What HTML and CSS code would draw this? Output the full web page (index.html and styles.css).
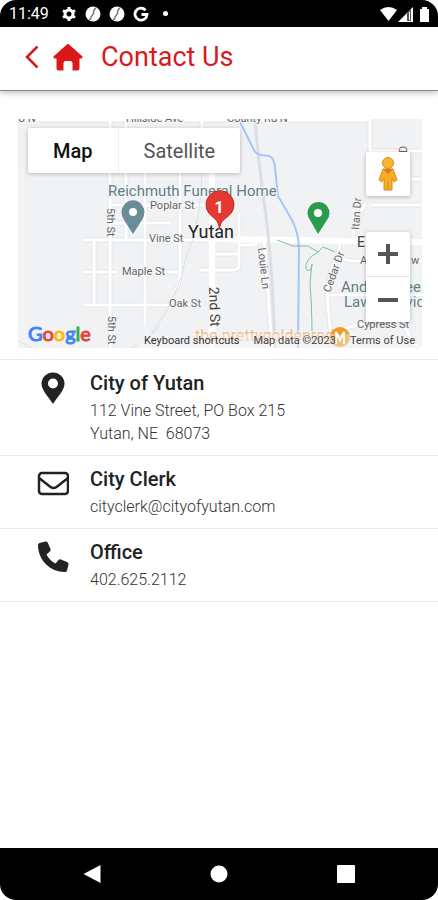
FILE: index.html
```html
<!DOCTYPE html>
<html lang="en">
<head>
    <meta charset="UTF-8">
    <meta name="viewport" content="width=device-width, initial-scale=1.0">
    <title>Contact Us</title>
    <link rel="stylesheet" href="styles.css">
</head>
<body>
  <div class="phone">

    <div class="status-bar">
      <span class="time">11:49</span>
      <svg class="status-icon" viewBox="0 0 16 16"><path fill="none" stroke="#fff" stroke-width="3" d="M8 4a4 4 0 1 0 .01 0z"/><path stroke="#fff" stroke-width="3" d="M8 1v3M8 12v3M2 4.500l2.500 1.500M11.500 10l2.500 1.500M2 11.500l2.500-1.500M11.500 6l2.500-1.500"/></svg>
      <svg class="status-icon" viewBox="0 0 16 16"><circle cx="8" cy="8" r="7.500" fill="#fff"/><path d="M11 2C7 4 10 7 7.500 9S7 13 4 14" fill="none" stroke="#777" stroke-width="1.500"/></svg>
      <svg class="status-icon" viewBox="0 0 16 16"><circle cx="8" cy="8" r="7.500" fill="#fff"/><path d="M11 2C7 4 10 7 7.500 9S7 13 4 14" fill="none" stroke="#777" stroke-width="1.500"/></svg>
      <svg class="status-icon" viewBox="0 0 16 16"><path d="M12.500 4.200A6 6 0 1 0 14 8.500H8.500" fill="none" stroke="#fff" stroke-width="2.800"/></svg>
      <span class="dot"></span>
      <svg class="signals" viewBox="0 0 54 18">
        <path fill="#fff" d="M1 5q8.500-6 17 0L9.500 16z"/>
        <path fill="#fff" d="M19 17L34 2v15z"/>
        <path fill="#555" d="M28 8l4-4v12h-4z"/><path stroke="#fff" stroke-width="1" d="M30.500 7v8"/>
        <path fill="#fff" d="M41 4h2V2h5v2h2v13h-9z"/>
      </svg>
    </div>

    <header class="header">
      <a class="back" href="#" aria-label="Back">
        <svg viewBox="0 0 14 24"><path d="M12.500 1.500L2 12l10.500 10.500" fill="none" stroke="#d71a1c" stroke-width="2.500"/></svg>
      </a>
      <a class="home" href="#" aria-label="Home">
        <svg viewBox="0 0 30 27"><path fill="#dc1717" d="M13.600.8a2 2 0 0 1 2.800 0L29 12c1 1 .5 2.500-1 2.500h-1.500V24a2.500 2.500 0 0 1-2.500 2.500h-4.500V19a2 2 0 0 0-2-2h-5a2 2 0 0 0-2 2v7.500H6A2.500 2.500 0 0 1 3.500 24v-9.500H2C.5 14.500 0 13 1 12z"/></svg>
      </a>
      <h1>Contact Us</h1>
    </header>

    <main>
      <div class="map">
        <svg class="map-canvas" viewBox="18 119 404 229">
          <rect x="18" y="119" width="404" height="229" fill="#f0f2f4"/>
          <!-- grey outlines first, then the white roads over them -->
          <g fill="none" stroke="#e4e7ea" stroke-width="5">
            <path d="M18 120H370M84 240H230M84 272H117M84 305H170M94 240v65M110 173v175M145 173v152M126 173v67M126 119v10M110 119v10M180 173v100q0 12-5 18M191 305h-10M166 272h12M110 205h120M110 223h60M215 254h23M200 270h33q6 0 6-6v-50M238 245h14q5 0 5-5M202 119v54M370 119v45M370 151h52M402 151v12M370 179h52M370 205h52M366 203l-13 22v15M340 240q0 12-5 20t-8 35l4 40M326 295h96M340 257q5 4 15 4h67M340 330q30-10 50-8t20 20l12 6M264 240l8 108"/>
          </g>
          <g fill="none" stroke="#fff" stroke-width="3">
            <path d="M18 120H370M84 240H230M84 272H117M84 305H170M94 240v65M110 173v175M145 173v152M126 173v67M126 119v10M110 119v10M180 173v100q0 12-5 18M191 305h-10M166 272h12M110 205h120M110 223h60M215 254h23M200 270h33q6 0 6-6v-50M238 245h14q5 0 5-5M202 119v54M370 119v45M370 151h52M402 151v12M370 179h52M370 205h52M366 203l-13 22v15M340 240q0 12-5 20t-8 35l4 40M326 295h96M340 257q5 4 15 4h67M340 330q30-10 50-8t20 20l12 6M264 240l8 108"/>
            <path stroke-width="6" d="M212 173v175M212 239l210 3"/>
          </g>
          <path d="M18 341l14 7M150 335l10-8M130 348l8-3" fill="none" stroke="#dcdfe2" stroke-width="1"/>
          <path d="M255 119q3 40 10 90t10 139" fill="none" stroke="#dcdee1" stroke-width="3"/>
          <path d="M202 173q-3 60-15 80q-8 45-35 80" fill="none" stroke="#dcdfe2" stroke-width="1"/>
          <path d="M240 122l13 26q2 6 8 7l8 1q5 1 6 12l3 28 14 24q7 14 7 30l-1 98" fill="none" stroke="#a5c6f7" stroke-width="2"/>
          <path d="M277 240l16 6h15l10 6 5-5 12 5M318 252q-14 8-12 17q5 5 6-5l-2 18q2 30 2 50" fill="none" stroke="#7fbf97" stroke-width="1"/>

          <g class="map-street">
            <text x="18" y="122">U N</text>
            <text x="126" y="122">Hillside Ave</text>
            <text x="227" y="122">County Rd N</text>
            <text x="150" y="209">Poplar St</text>
            <text x="149" y="242">Vine St</text>
            <text x="122" y="275">Maple St</text>
            <text x="169" y="307">Oak St</text>
            <text x="357" y="328">Cypress St</text>
            <text transform="translate(107 208) rotate(90)">5th St</text>
            <text transform="translate(108 316) rotate(90)">5th St</text>
            <text transform="translate(258 248) rotate(84)">Louie Ln</text>
            <text transform="translate(330 293) rotate(-70)">Cedar Dr</text>
            <text transform="translate(359 230) rotate(-86)">Itan Dr</text>
            <text transform="translate(407 153) rotate(-90)">D</text>
            <text class="map-main" transform="translate(209 287) rotate(88)">2nd St</text>
            <text class="map-main" x="357" y="247">E</text>
            <text x="360" y="264">A</text>
            <text x="411" y="264">w</text>
          </g>
          <g class="map-place">
            <text x="108" y="196">Reichmuth Funeral Home</text>
            <text x="341" y="292">Anders Tree</text>
            <text x="344" y="307">Lawn Service</text>
          </g>
          <text class="map-shop" x="195" y="341">the.prettygoldenrod</text>

          <path fill="#6a8b98" d="M133 234l-9-14q-5-8 0-15a11 11 0 0 1 18 0q5 7 0 15z"/>
          <circle cx="133" cy="212" r="4" fill="#fff"/>
          <path fill="#2b9c4e" d="M318 234l-8-14q-5-7 0-14a11 11 0 0 1 17 0q5 7 0 14z"/>
          <circle cx="318" cy="213" r="4" fill="#fff"/>
          <circle cx="340" cy="337" r="10" fill="#f39a2c"/>
          <path d="M336 344v-12l4 8 4-8v12" fill="none" stroke="#fff" stroke-width="2"/>

          <text class="map-city" x="188" y="238">Yutan</text>
          <path fill="#e53a31" stroke="#c5281f" stroke-width="1" d="M219.500 229c-1-9-5-10-10-15a14 14 0 1 1 21 0c-5 5-10 6-11 15z"/>
          <text class="map-number" x="219" y="213">1</text>
        </svg>

        <div class="map-type">
          <button class="active">Map</button>
          <button>Satellite</button>
        </div>
        <div class="map-tools">
          <button class="pegman" aria-label="Street view">
            <svg viewBox="0 0 20 34">
              <path fill="#f5ae25" stroke="#d98c1a" stroke-width="1" d="M5 12h10l4 11-3 2-2-4v12H6V21l-2 4-3-2z"/>
              <circle cx="10" cy="6" r="5.500" fill="#f8b62d" stroke="#d98c1a"/>
              <path fill="#e2762a" d="M5 12h10l-5 5z"/><path d="M10 24v9" stroke="#d98c1a"/>
            </svg>
          </button>
          <div class="zoom">
            <button aria-label="Zoom in"><svg viewBox="0 0 20 20"><path d="M0 10h20M10 0v20" stroke="#555" stroke-width="4"/></svg></button>
            <button aria-label="Zoom out"><svg viewBox="0 0 20 20"><path d="M0 10h20" stroke="#555" stroke-width="4"/></svg></button>
          </div>
        </div>
        <a class="google" href="#"><span class="blue">G</span><span class="red">o</span><span class="yellow">o</span><span class="blue">g</span><span class="green">l</span><span class="red">e</span></a>
        <div class="map-terms">
          <button>Keyboard shortcuts</button>
          <span>Map data ©2023</span>
          <a href="#">Terms of Use</a>
        </div>
      </div>

      <ul class="contacts">
        <li>
          <svg class="contact-icon" viewBox="0 0 32 32"><path fill="#222" fill-rule="evenodd" d="M16 32C13 27 4.500 18 4.500 12a11.500 11.500 0 0 1 23 0C27.500 18 19 27 16 32zm0-15.500a5 5 0 1 0 0-10 5 5 0 0 0 0 10z"/></svg>
          <div>
            <h2>City of Yutan</h2>
            <p>112 Vine Street, PO Box 215<br>Yutan, NE&nbsp; 68073</p>
          </div>
        </li>
        <li>
          <svg class="contact-icon" viewBox="0 0 32 32"><rect x="2" y="5" width="29" height="21" rx="3" fill="none" stroke="#222" stroke-width="2.500"/><path d="M2 10l11.500 9q3 2 6 0L31 10" fill="none" stroke="#222" stroke-width="2.500"/></svg>
          <div>
            <h2>City Clerk</h2>
            <p><a href="mailto:cityclerk@cityofyutan.com">cityclerk@cityofyutan.com</a></p>
          </div>
        </li>
        <li>
          <svg class="contact-icon" viewBox="0 0 32 32"><path fill="#222" d="M2.500 2L8.500.5q1.500-.3 2.200 1L13.500 8q.5 1.500-.7 2.500L9.500 13.500q3 6 9 9l3-3.500q1-1.200 2.500-.6l6.500 2.800q1.300.7 1 2.200L30 29.500q-.4 1.500-2 1.500C13 31 1 19 1 4q0-1.600 1.500-2z"/></svg>
          <div>
            <h2>Office</h2>
            <p><a href="tel:4026252112">402.625.2112</a></p>
          </div>
        </li>
      </ul>
    </main>

    <nav class="nav-bar">
      <button aria-label="Back"><svg viewBox="0 0 18 18"><path fill="#fff" d="M17.500 0v18L.5 9z"/></svg></button>
      <button aria-label="Home"><svg viewBox="0 0 18 18"><circle cx="9" cy="9" r="8.500" fill="#fff"/></svg></button>
      <button aria-label="Recent apps"><svg viewBox="0 0 18 18"><rect width="18" height="18" rx="1" fill="#fff"/></svg></button>
    </nav>
  </div>
</body>
</html>
```
FILE: styles.css
```css
*{
    box-sizing: border-box;
}
body{
    font-family: Roboto, "Liberation Sans", sans-serif;
    margin: 0;
    background-color: #fff;
    color: #222;
}
button{
    font-family: inherit;
    margin: 0;
    padding: 0;
    border: 0;
    background: none;
    cursor: pointer;
}
a{
    color: inherit;
    text-decoration: none;
}
svg{
    display: block;
}
.phone{
    display: flex;
    flex-direction: column;
    min-height: 100vh;
    border-radius: 16px;
    overflow: hidden;
}

/* status bar */
.status-bar{
    display: flex;
    align-items: center;
    gap: 8px;
    height: 27px;
    padding: 0 9px;
    background-color: #000;
    color: #fff;
}
.time{
    width: 44px;
    font-size: 16px;
    font-weight: 400;
}
.status-icon{
    width: 16px;
    height: 16px;
}
.dot{
    width: 5px;
    height: 5px;
    margin-left: 6px;
    border-radius: 50%;
    background-color: #fff;
}
.signals{
    width: 54px;
    height: 18px;
    margin-left: auto;
    margin-right: -4px;
}

/* header */
.header{
    display: flex;
    align-items: center;
    height: 64px;
    padding: 0 16px 3px 25px;
    border-bottom: 1px solid #888;
    box-shadow: 0 2px 6px rgba(0,0,0,0.25);
}
.back svg{
    width: 14px;
    height: 24px;
}
.home{
    margin: 0 18px 0 14px;
}
.home svg{
    width: 30px;
    height: 27px;
}
.header h1{
    margin: 0;
    font-size: 27px;
    font-weight: 400;
    color: #d71a1c;
}

/* map */
.map{
    position: relative;
    margin: 28px 16px 11px 18px;
}
.map-canvas{
    width: 100%;
}
.map-canvas text{
    paint-order: stroke;
    stroke: #f5f6f7;
    stroke-width: 2px;
}
.map-street{
    font-size: 11px;
    fill: #666;
}
.map-main{
    font-size: 14px;
    fill: #444;
}
.map-place{
    font-size: 15px;
    fill: #607d86;
}
.map-shop{
    font-size: 16px;
    fill: #f0b98c;
}
.map-city{
    font-size: 18px;
    fill: #222;
}
.map-canvas .map-number{
    font-size: 16px;
    font-weight: 700;
    fill: #fff;
    stroke: none;
    text-anchor: middle;
}
.map-type{
    position: absolute;
    top: 9px;
    left: 10px;
    display: flex;
    background-color: #fff;
    border-radius: 2px;
    box-shadow: 0 1px 4px rgba(0,0,0,0.25);
}
.map-type button{
    height: 45px;
    padding: 0 25px;
    font-size: 20px;
    color: #555;
}
.map-type .active{
    border-right: 1px solid #eee;
    font-weight: 500;
    color: #111;
}
.map-tools{
    position: absolute;
    top: 33px;
    right: 12px;
    display: flex;
    flex-direction: column;
    gap: 36px;
    width: 44px;
}
.pegman, .zoom{
    background-color: #fff;
    border-radius: 2px;
    box-shadow: 0 1px 4px rgba(0,0,0,0.25);
}
.pegman{
    display: flex;
    justify-content: center;
    align-items: center;
    height: 44px;
}
.pegman svg{
    width: 20px;
    height: 34px;
}
.zoom button{
    display: flex;
    justify-content: center;
    align-items: center;
    width: 100%;
    height: 45px;
}
.zoom button:first-child{
    border-bottom: 1px solid #e6e6e6;
}
.zoom svg{
    width: 20px;
    height: 20px;
}
.google{
    position: absolute;
    left: 10px;
    bottom: 2px;
    font-family: Lato, sans-serif;
    font-size: 20px;
    line-height: 26px;
    -webkit-text-stroke: 1px;
}
.blue{
    color: #4285f4;
}
.red{
    color: #ea4335;
}
.yellow{
    color: #fbbc05;
}
.green{
    color: #34a853;
}
.map-terms{
    position: absolute;
    right: 0;
    bottom: 0;
    display: flex;
    gap: 14px;
    padding: 0 7px;
    font-size: 11px;
    line-height: 14px;
    color: #444;
    background-color: rgba(245,245,245,0.4);
}
.map-terms button{
    font-size: 11px;
    line-height: 14px;
    color: #333;
}

/* contact rows */
.contacts{
    margin: 0;
    padding: 0;
    list-style: none;
    border-top: 1px solid #ebebeb;
}
.contacts li{
    display: flex;
    gap: 21px;
    padding: 10px 16px 10px 37px;
    border-bottom: 1px solid #ebebeb;
}
.contact-icon{
    width: 32px;
    height: 32px;
    margin-top: 2px;
}
.contacts h2{
    margin: 0 0 3px;
    font-size: 20px;
    line-height: 26px;
    font-weight: 500;
}
.contacts p{
    margin: 0;
    font-size: 16px;
    line-height: 23px;
    font-weight: 300;
    color: #333;
}

/* bottom navigation */
.nav-bar{
    display: grid;
    grid-template-columns: repeat(3, 1fr);
    margin-top: auto;
    padding: 0 29px;
    height: 52px;
    background-color: #000;
}
.nav-bar button{
    display: flex;
    justify-content: center;
    align-items: center;
}
.nav-bar svg{
    width: 18px;
    height: 18px;
}
```
